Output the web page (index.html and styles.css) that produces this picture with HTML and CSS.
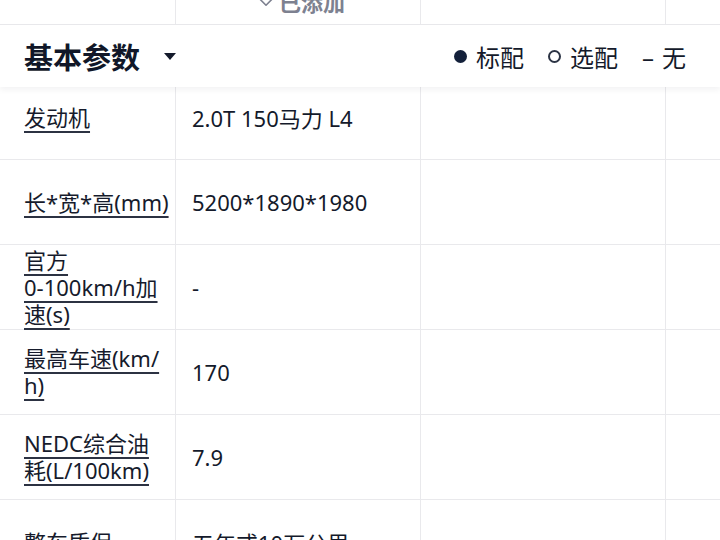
FILE: index.html
```html
<!DOCTYPE html>
<html lang="zh-CN">
<head>
<meta charset="utf-8">
<title>参数配置</title>
<link rel="stylesheet" href="styles.css">
</head>
<body>
<div class="page">
  <div class="row top">
    <div class="cell"></div>
    <div class="cell">
      <div class="added">
        <svg class="heart" width="18" height="18" viewBox="0 0 18 18"><path d="M9 16.2 L2.4 9.6 C0.6 7.8 0.8 4.8 2.8 3.5 C4.7 2.2 7.4 2.8 9 4.8 C10.6 2.8 13.3 2.2 15.2 3.5 C17.2 4.8 17.4 7.8 15.6 9.6 Z" fill="none" stroke="#7d8190" stroke-width="1.6" stroke-linejoin="round"/></svg>
        <span>已添加</span>
      </div>
    </div>
    <div class="cell"></div>
    <div class="cell"></div>
  </div>

  <div class="section-head">
    <div class="title">基本参数<span class="caret"></span></div>
    <div class="legend">
      <span class="item"><span class="dot filled"></span>标配</span>
      <span class="item"><span class="dot open"></span>选配</span>
      <span class="item"><span class="dash">–</span>无</span>
    </div>
  </div>

  <div class="row first">
    <div class="cell label"><span>发动机</span></div>
    <div class="cell value">2.0T 150马力 L4</div>
    <div class="cell"></div>
    <div class="cell"></div>
  </div>
  <div class="row">
    <div class="cell label"><span>长*宽*高(mm)</span></div>
    <div class="cell value">5200*1890*1980</div>
    <div class="cell"></div>
    <div class="cell"></div>
  </div>
  <div class="row">
    <div class="cell label"><span>官方<br>0-100km/h加<br>速(s)</span></div>
    <div class="cell value">-</div>
    <div class="cell"></div>
    <div class="cell"></div>
  </div>
  <div class="row">
    <div class="cell label"><span>最高车速(km/<br>h)</span></div>
    <div class="cell value">170</div>
    <div class="cell"></div>
    <div class="cell"></div>
  </div>
  <div class="row">
    <div class="cell label"><span>NEDC综合油<br>耗(L/100km)</span></div>
    <div class="cell value">7.9</div>
    <div class="cell"></div>
    <div class="cell"></div>
  </div>
  <div class="row">
    <div class="cell label"><span>整车质保</span></div>
    <div class="cell value">五年或10万公里</div>
    <div class="cell"></div>
    <div class="cell"></div>
  </div>
</div>
</body>
</html>
```
FILE: styles.css
```css
html, body {
  margin: 0;
  padding: 0;
  background: #ffffff;
}
body {
  font-family: "Noto Sans", "Noto Sans CJK SC", sans-serif;
  color: #141a2b;
  overflow: hidden;
  height: 540px;
}
.page {
  width: 720px;
  overflow: hidden;
}
.row {
  display: grid;
  grid-template-columns: 176px 245px 245px 245px;
  height: 85px;
  border-bottom: 1px solid #e9e9ec;
  box-sizing: border-box;
}
.row.top {
  height: 25px;
  overflow: hidden;
}
.row.first {
  height: 73px;
}
.cell {
  border-right: 1px solid #e9e9ec;
  box-sizing: border-box;
  display: flex;
  align-items: center;
  min-width: 0;
}
.row.first .cell {
  padding-bottom: 12px;
}
.top .cell {
  align-items: flex-start;
}
.added {
  margin-top: -11px;
  width: 100%;
  display: flex;
  justify-content: center;
  align-items: center;
  gap: 4px;
  color: #7d8190;
  font-size: 22px;
  font-weight: 700;
  line-height: 26px;
  padding-left: 6px;
}
.heart {
  display: block;
  margin-top: -8px;
}
.section-head {
  position: relative;
  z-index: 2;
  height: 62px;
  background: #ffffff;
  box-shadow: 0 3px 6px rgba(20, 26, 43, 0.05);
  display: flex;
  align-items: center;
  justify-content: space-between;
  padding: 0 34px 0 24px;
}
.title {
  font-size: 29px;
  font-weight: 700;
  display: flex;
  align-items: center;
  color: #111728;
}
.caret {
  width: 0;
  height: 0;
  border-left: 6px solid transparent;
  border-right: 6px solid transparent;
  border-top: 7px solid #141a2b;
  margin-left: 24px;
  margin-top: 1px;
}
.legend {
  display: flex;
  align-items: center;
  gap: 24px;
  font-size: 24px;
}
.item {
  display: flex;
  align-items: center;
}
.dot {
  width: 13px;
  height: 13px;
  border-radius: 50%;
  box-sizing: border-box;
  margin-right: 9px;
}
.dot.filled {
  background: #13203a;
}
.dot.open {
  border: 2px solid #2b3344;
}
.dash {
  margin-right: 8px;
}
.label {
  padding: 0 4px 0 24px;
  font-size: 22px;
  line-height: 27px;
  color: #161b2c;
}
.label span {
  text-decoration: underline;
  text-decoration-thickness: 1.5px;
  text-underline-offset: 5px;
  text-decoration-color: #2c3242;
}
.value {
  padding-left: 16px;
  font-size: 22px;
  color: #141a2b;
}
```
